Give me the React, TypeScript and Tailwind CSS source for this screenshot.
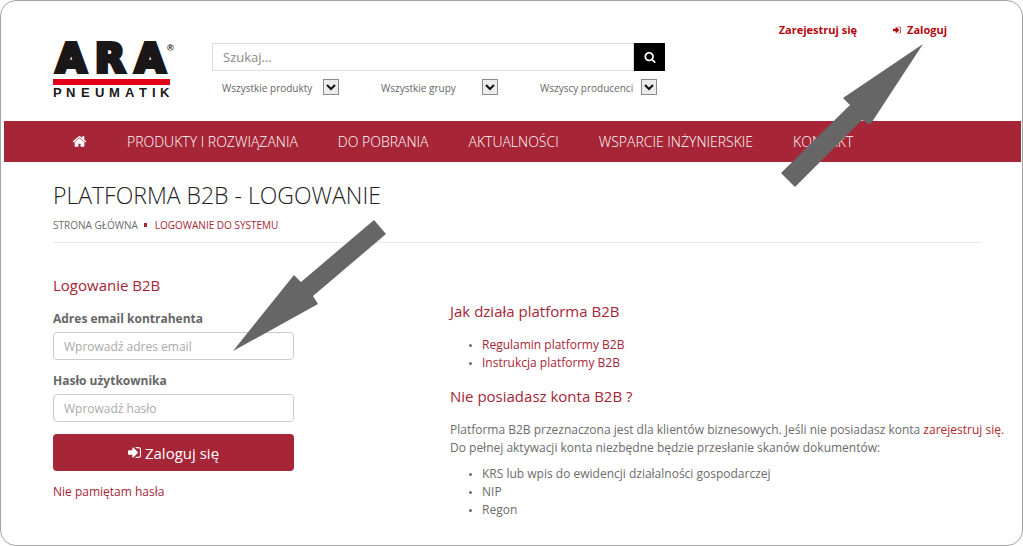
import React from "react";

const navItems = [
  "PRODUKTY I ROZWIĄZANIA",
  "DO POBRANIA",
  "AKTUALNOŚCI",
  "WSPARCIE INŻYNIERSKIE",
  "KONTAKT",
];

const filters = ["Wszystkie produkty", "Wszystkie grupy", "Wszyscy producenci"];

const documents = [
  "KRS lub wpis do ewidencji działalności gospodarczej",
  "NIP",
  "Regon",
];

type IconProps = { className?: string };

const HomeIcon: React.FC<IconProps> = ({ className }) => (
  <svg viewBox="0 0 1792 1792" fill="currentColor" className={className} aria-hidden="true">
    <path d="M1472 992v480q0 26-19 45t-45 19h-384v-384h-256v384h-384q-26 0-45-19t-19-45v-480q0-1 .5-3t.5-3l575-474 575 474q1 2 1 6zm223-69l-62 74q-8 9-21 11h-3q-13 0-21-7l-692-577-692 577q-12 8-24 7-13-2-21-11l-62-74q-8-10-7-23.5t11-21.5l719-599q32-26 76-26t76 26l244 204v-195q0-14 9-23t23-9h192q14 0 23 9t9 23v408l219 182q10 8 11 21.5t-7 23.5z" />
  </svg>
);

const SearchIcon: React.FC<IconProps> = ({ className }) => (
  <svg viewBox="0 0 1792 1792" fill="currentColor" className={className} aria-hidden="true">
    <path d="M1216 832q0-185-131.5-316.5t-316.5-131.5-316.5 131.5-131.5 316.5 131.5 316.5 316.5 131.5 316.5-131.5 131.5-316.5zm512 832q0 52-38 90t-90 38q-54 0-90-38l-343-342q-179 124-399 124-143 0-273.5-55.5t-225-150-150-225-55.5-273.5 55.5-273.5 150-225 225-150 273.5-55.5 273.5 55.5 225 150 150 225 55.5 273.5q0 220-124 399l343 343q37 37 37 90z" />
  </svg>
);

const SignInIcon: React.FC<IconProps> = ({ className }) => (
  <svg viewBox="0 128 1536 1536" fill="currentColor" className={className} aria-hidden="true">
    <path d="M1184 896q0 26-19 45l-544 544q-19 19-45 19t-45-19-19-45v-288h-448q-26 0-45-19t-19-45v-384q0-26 19-45t45-19h448v-288q0-26 19-45t45-19 45 19l544 544q19 19 19 45zm352-352v704q0 119-84.5 203.5t-203.5 84.5h-320q-13 0-22.5-9.5t-9.5-22.5q0-4-1-20t-.5-26.5 3-23.5 10-19.5 20.5-6.5h320q66 0 113-47t47-113v-704q0-66-47-113t-113-47h-312l-11.5-1-11.5-3-8-5.5-7-9-2-13.5q0-4-1-20t-.5-26.5 3-23.5 10-19.5 20.5-6.5h320q119 0 203.5 84.5t84.5 203.5z" />
  </svg>
);

const Logo: React.FC = () => (
  <svg width="123" height="56" viewBox="0 0 123 56" className="overflow-visible" role="img" aria-label="ARA Pneumatik">
    <text
      x="3 42 82"
      y="29"
      fontSize="39"
      fontWeight="bold"
      fontFamily="DejaVu Sans, sans-serif"
      fill="#1a1718"
      stroke="#1a1718"
      strokeWidth="4"
    >
      ARA
    </text>
    <text x="114" y="8" fontSize="9" fontWeight="bold" fontFamily="Liberation Sans, sans-serif" fill="#1a1718">
      ®
    </text>
    <rect x="0" y="36" width="117" height="6" fill="#e2001a" />
    <text
      x="0 13 28 42 56 72 86 99 107"
      y="54"
      fontSize="13"
      fontWeight="bold"
      fontFamily="Liberation Sans, sans-serif"
      fill="#1a1718"
    >
      PNEUMATIK
    </text>
  </svg>
);

const FilterSelect: React.FC<{ label: string }> = ({ label }) => (
  <div className="relative w-[127px]">
    <select
      aria-label={label}
      className="w-full h-4 appearance-none pl-[10px] text-[10px] leading-4 text-[#666] focus:outline-none"
    >
      <option>{label}</option>
    </select>
    <span className="absolute right-0 top-0 w-4 h-4 border border-[#8a8a8a] bg-[#ececec] flex items-center justify-center pointer-events-none">
      <svg viewBox="0 0 10 7" className="w-[10px] h-[7px]" aria-hidden="true">
        <path d="M1 1l4 4 4-4" fill="none" stroke="#111" strokeWidth="2" />
      </svg>
    </span>
  </div>
);

const Field: React.FC<{ id: string; label: string; placeholder: string; type: string }> = ({
  id,
  label,
  placeholder,
  type,
}) => (
  <div className="mb-3">
    <label htmlFor={id} className="block text-xs leading-[18px] font-bold text-[#666] mb-1">
      {label}
    </label>
    <input
      id={id}
      type={type}
      placeholder={placeholder}
      className="block w-full h-7 rounded border border-[#ccc] px-[10px] text-xs placeholder:text-[#aaa] focus:outline-none"
    />
  </div>
);

export default function App() {
  return (
    <div className="relative min-h-screen rounded-2xl border border-[#a5a5a5] bg-white font-['Open_Sans',sans-serif] text-xs leading-[18px] text-[#6b6b6b]">
      <header className="flex items-start pl-[52px] pr-[75px] h-[120px]">
        <div className="pt-[42px] w-[159px] shrink-0">
          <a href="#" className="block">
            <Logo />
          </a>
        </div>
        <div className="pt-[42px] w-[453px] shrink-0">
          <form className="flex h-7">
            <input
              type="text"
              aria-label="Szukaj"
              placeholder="Szukaj..."
              className="grow border border-[#ddd] px-[10px] text-[13px] placeholder:text-[#888] focus:outline-none"
            />
            <button type="submit" aria-label="Szukaj" className="w-[31px] bg-black text-white flex items-center justify-center">
              <SearchIcon className="w-3 h-3" />
            </button>
          </form>
          <div className="flex gap-8 mt-2">
            {filters.map((label) => (
              <FilterSelect key={label} label={label} />
            ))}
          </div>
        </div>
        <div className="ml-auto pt-5 flex gap-9 text-[11px] font-bold text-[#b8070f]">
          <a href="#">Zarejestruj się</a>
          <a href="#" className="flex items-center gap-[6px]">
            <SignInIcon className="w-2 h-2" />
            Zaloguj
          </a>
        </div>
      </header>

      <nav className="ml-[3px] mr-px h-[41px] bg-[#a62537] flex items-center gap-10 pl-[68px] text-sm font-light text-white">
        <a href="#" aria-label="Strona główna">
          <HomeIcon className="w-[15px] h-[15px]" />
        </a>
        {navItems.map((item) => (
          <a key={item} href="#" className="whitespace-nowrap">
            {item}
          </a>
        ))}
      </nav>

      <main className="pl-[52px]">
        <div className="mr-10 pt-4 pb-2 border-b border-[#e8e8e8]">
          <h1 className="text-[23px] leading-[34px] font-light text-[#222]">PLATFORMA B2B - LOGOWANIE</h1>
          <div className="mt-1 flex items-center gap-[6px] text-[10px]">
            <a href="#">STRONA GŁÓWNA</a>
            <span className="w-[3px] h-1 bg-[#a62537]" />
            <a href="#" className="ml-[2px] text-[#a62537]">
              LOGOWANIE DO SYSTEMU
            </a>
          </div>
        </div>

        <div className="flex">
          <form className="w-[241px] mr-[156px] shrink-0 pt-[30px]">
            <h2 className="text-[15px] leading-6 text-[#a62537] mb-[13px]">Logowanie B2B</h2>
            <Field id="email" type="email" label="Adres email kontrahenta" placeholder="Wprowadź adres email" />
            <Field id="password" type="password" label="Hasło użytkownika" placeholder="Wprowadź hasło" />
            <button
              type="submit"
              className="w-full h-[37px] rounded bg-[#a62537] text-white text-[15px] flex items-center justify-center gap-1"
            >
              <SignInIcon className="w-[13px] h-[13px]" />
              Zaloguj się
            </button>
            <a href="#" className="inline-block mt-3 text-[#a62537]">
              Nie pamiętam hasła
            </a>
          </form>

          <section className="pt-14">
            <h2 className="text-[15px] leading-6 text-[#a62537] mb-[13px]">Jak działa platforma B2B</h2>
            <ul className="pl-8 list-disc marker:text-[8px]">
              <li>
                <a href="#" className="text-[#a62537]">Regulamin platformy B2B</a>
              </li>
              <li>
                <a href="#" className="text-[#a62537]">Instrukcja platformy B2B</a>
              </li>
            </ul>
            <h2 className="mt-3 text-[15px] leading-6 text-[#a62537] mb-[13px]">Nie posiadasz konta B2B ?</h2>
            <p>
              Platforma B2B przeznaczona jest dla klientów biznesowych. Jeśli nie posiadasz konta{" "}
              <a href="#" className="text-[#b3262c]">zarejestruj się.</a>
              <br />
              Do pełnej aktywacji konta niezbędne będzie przesłanie skanów dokumentów:
            </p>
            <ul className="mt-2 pl-8 list-disc marker:text-[8px]">
              {documents.map((doc) => (
                <li key={doc}>{doc}</li>
              ))}
            </ul>
          </section>
        </div>
      </main>

      {/* hint arrows pointing at the login link and the email field */}
      <svg
        viewBox="0 0 142 143"
        className="absolute top-[43px] left-[780px] w-[142px] h-[143px] pointer-events-none"
        aria-hidden="true"
      >
        <path d="M142 0L62 54l7 7L0 129l14 14 67-67 8 5z" fill="#666" />
      </svg>
      <svg
        viewBox="0 0 153 131"
        className="absolute top-[219px] left-[232px] w-[153px] h-[131px] pointer-events-none"
        aria-hidden="true"
      >
        <path d="M0 131L61 55l7 7 73-62 12 14-73 62 5 8z" fill="#666" />
      </svg>
    </div>
  );
}
